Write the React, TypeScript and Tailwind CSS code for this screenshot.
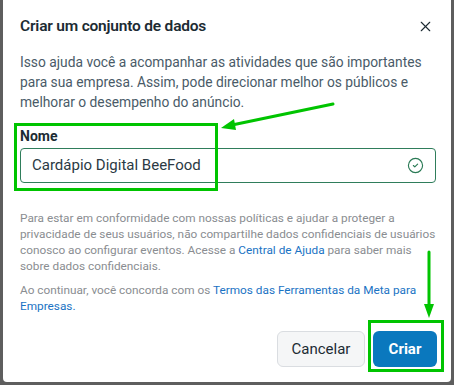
import { X, CircleCheck } from 'lucide-react';

const body = { fontFamily: 'Roboto, "Liberation Sans", sans-serif' };

export default function App() {
  return (
    <div className="relative w-[454px] h-[385px] bg-[#5e5e5e] overflow-hidden" style={body}>
      {/* dialog */}
      <div className="ml-[3px] w-[448px] h-[382px] bg-white rounded-b-[4px] flex flex-col pl-[17px] pr-[15px]">
        <div className="flex items-center justify-between pt-[14px] h-[38px]">
          <h2 className="text-[15.5px] leading-[24px] font-semibold tracking-[-0.2px] text-[#1c2b33]">
            Criar um conjunto de dados
          </h2>
          <X size={17} strokeWidth={1.6} className="text-[#1c2b33] mr-[2px]" />
        </div>

        <p className="mt-[14px] text-[13.8px] leading-[20px] text-[#4a5b68] whitespace-nowrap">
          Isso ajuda você a acompanhar as atividades que são importantes
          <br />
          para sua empresa. Assim, pode direcionar melhor os públicos e
          <br />
          melhorar o desempenho do anúncio.
        </p>

        <label className="mt-[15px] text-[14px] leading-[18px] font-bold text-[#1c2b33]">Nome</label>
        <div className="mt-[3px] h-[35px] border border-[#2f7d5b] rounded-[4px] flex items-center justify-between pl-[11px] pr-[11px]">
          <span className="text-[15px] text-[#2b3a44]">Cardápio Digital BeeFood</span>
          <CircleCheck size={17} strokeWidth={1.6} className="text-[#2a7a55]" />
        </div>

        <p className="mt-[27px] text-[11.8px] leading-[16px] text-[#8a8d91] whitespace-nowrap">
          Para estar em conformidade com nossas políticas e ajudar a proteger a
          <br />
          privacidade de seus usuários, não compartilhe dados confidenciais de usuários
          <br />
          conosco ao configurar eventos. Acesse a <span className="text-[#1a73c4]">Central de Ajuda</span>{' '}
          para saber mais
          <br />
          sobre dados confidenciais.
        </p>
        <p className="mt-[8px] text-[11.8px] leading-[16px] text-[#8a8d91] whitespace-nowrap">
          Ao continuar, você concorda com os{' '}
          <span className="text-[#1a73c4]">Termos das Ferramentas da Meta para</span>
          <br />
          <span className="text-[#1a73c4]">Empresas.</span>
        </p>

        <div className="mt-[17px] flex justify-end gap-[8px] -mr-[1px]">
          <button className="h-[36px] w-[88px] rounded-[6px] border border-[#dadde1] bg-[#f5f6f7] text-[15px] text-[#1c2b33]">
            Cancelar
          </button>
          <button className="h-[36px] w-[64px] rounded-[6px] bg-[#0a78be] text-[15px] font-bold text-white">
            Criar
          </button>
        </div>
      </div>

      {/* annotations */}
      <div className="absolute left-[14px] top-[123px] w-[204px] h-[68px] border-[3px] border-[#00c400]" />
      <div className="absolute left-[368px] top-[320px] w-[76px] h-[52px] border-[3px] border-[#00c400]" />
      <svg className="absolute inset-0 pointer-events-none" width="454" height="385">
        <line x1="333" y1="104" x2="232" y2="125" stroke="#00c400" strokeWidth="3" strokeLinecap="round" />
        <polygon points="221,128 234,119 236,130" fill="#00c400" />
        <line x1="429" y1="252" x2="429" y2="306" stroke="#00c400" strokeWidth="3" strokeLinecap="round" />
        <polygon points="424,304 434,304 429,318" fill="#00c400" />
      </svg>
    </div>
  );
}
